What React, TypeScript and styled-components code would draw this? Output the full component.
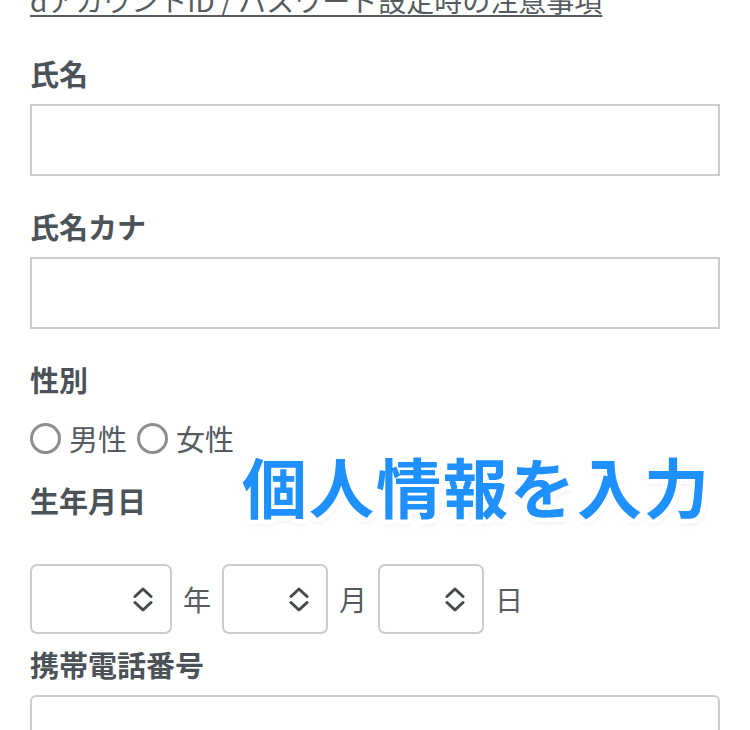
import styled, { createGlobalStyle } from "styled-components";

const GlobalStyle = createGlobalStyle`
  html, body {
    margin: 0;
    padding: 0;
    background: #ffffff;
  }

  body {
    font-family: "Noto Sans CJK JP", "Noto Sans", sans-serif;
    color: #4b5358;
  }
`;

const Page = styled.div`
  position: relative;
  width: 750px;
  height: 730px;
  overflow: hidden;
  padding: 0 30px;
  box-sizing: border-box;
`;

const NoticeLink = styled.a`
  display: block;
  margin-top: -14px;
  font-size: 28px;
  line-height: 28px;
  color: #555b5f;
  text-decoration: underline;
  text-underline-offset: 3px;
  text-decoration-thickness: 2px;
  white-space: nowrap;
`;

const Field = styled.div<{ $top: number }>`
  display: flex;
  flex-direction: column;
  margin-top: ${(p) => p.$top}px;
`;

const Label = styled.div`
  font-size: 29px;
  line-height: 28px;
  font-weight: 700;
  color: #4b5358;
`;

const TextInput = styled.div<{ $rounded?: boolean; $gap: number }>`
  margin-top: ${(p) => p.$gap}px;
  height: 72px;
  box-sizing: border-box;
  border: 2px solid #cccccc;
  border-radius: ${(p) => (p.$rounded ? "6px" : "0")};
  background: #ffffff;
`;

const RadioRow = styled.div`
  display: flex;
  align-items: center;
  margin-top: 30px;
  height: 30px;
`;

const RadioOption = styled.label`
  display: flex;
  align-items: center;
  gap: 8px;
  margin-right: 10px;
  font-size: 29px;
  line-height: 30px;
  color: #555b5f;
`;

const RadioCircle = styled.span`
  width: 31px;
  height: 31px;
  box-sizing: border-box;
  border: 3px solid #8e8e8e;
  border-radius: 50%;
  background: #ffffff;
`;

const DateRow = styled.div`
  display: flex;
  align-items: center;
  margin-top: 50px;
`;

const SelectBox = styled.div<{ $width: number }>`
  display: flex;
  align-items: center;
  justify-content: flex-end;
  width: ${(p) => p.$width}px;
  height: 70px;
  box-sizing: border-box;
  padding-right: 16px;
  border: 2px solid #cccccc;
  border-radius: 7px;
  background: #ffffff;
`;

const DateUnit = styled.span`
  margin: 0 11px;
  font-size: 28px;
  line-height: 28px;
  color: #555b5f;
`;

const Caption = styled.div`
  position: absolute;
  left: 242px;
  top: 443px;
  font-size: 65px;
  line-height: 84px;
  font-weight: 700;
  letter-spacing: 2px;
  color: #1e90ff;
  white-space: nowrap;
  text-shadow:
    3px 0 0 #fff, -3px 0 0 #fff, 0 3px 0 #fff, 0 -3px 0 #fff,
    2px 2px 0 #fff, -2px 2px 0 #fff, 2px -2px 0 #fff, -2px -2px 0 #fff,
    5px 0 0 #fff, -5px 0 0 #fff, 0 5px 0 #fff, 0 -5px 0 #fff,
    4px 4px 0 #fff, -4px 4px 0 #fff, 4px -4px 0 #fff, -4px -4px 0 #fff,
    1px 3px 6px rgba(0, 0, 0, 0.25);
`;

function UpDown() {
  return (
    <svg width="22" height="25" viewBox="0 0 22 25" fill="none">
      <path
        d="M3 9.5 L11 2 L19 9.5 M3 15.5 L11 23 L19 15.5"
        stroke="#444a4e"
        strokeWidth="3"
        strokeLinecap="round"
        strokeLinejoin="round"
      />
    </svg>
  );
}

export default function App() {
  return (
    <>
      <GlobalStyle />
      <Page>
        <NoticeLink href="#">dアカウントID / パスワード設定時の注意事項</NoticeLink>

        <Field $top={45}>
          <Label>氏名</Label>
          <TextInput $gap={17} />
        </Field>

        <Field $top={36}>
          <Label>氏名カナ</Label>
          <TextInput $gap={17} />
        </Field>

        <Field $top={36}>
          <Label>性別</Label>
          <RadioRow>
            <RadioOption>
              <RadioCircle />
              男性
            </RadioOption>
            <RadioOption>
              <RadioCircle />
              女性
            </RadioOption>
          </RadioRow>
        </Field>

        <Field $top={33}>
          <Label>生年月日</Label>
          <DateRow>
            <SelectBox $width={142}>
              <UpDown />
            </SelectBox>
            <DateUnit>年</DateUnit>
            <SelectBox $width={106}>
              <UpDown />
            </SelectBox>
            <DateUnit>月</DateUnit>
            <SelectBox $width={106}>
              <UpDown />
            </SelectBox>
            <DateUnit>日</DateUnit>
          </DateRow>
        </Field>

        <Field $top={16}>
          <Label>携帯電話番号</Label>
          <TextInput $gap={17} $rounded />
        </Field>

        <Caption>個人情報を入力</Caption>
      </Page>
    </>
  );
}
